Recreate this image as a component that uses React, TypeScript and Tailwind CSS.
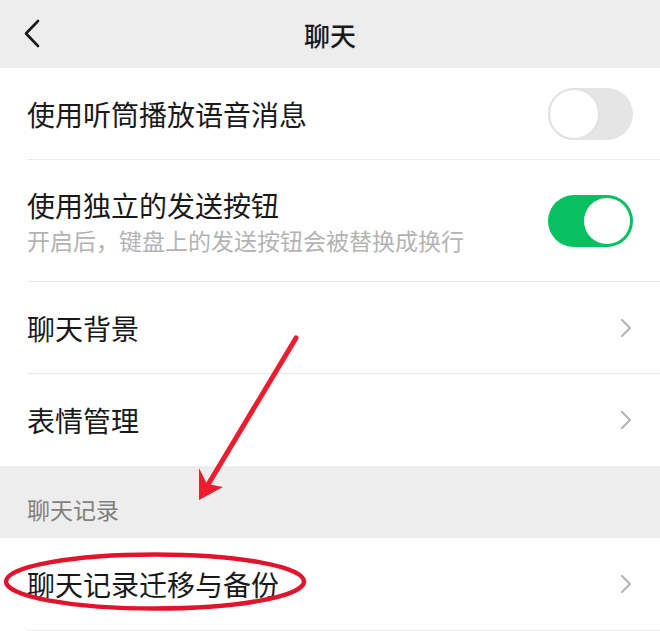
import React from 'react';

const font = { fontFamily: '"Noto Sans CJK SC", "Noto Sans", sans-serif' };

const Chevron = () => (
  <svg width="14" height="22" viewBox="0 0 14 22" className="shrink-0">
    <path d="M3 3 L11 11 L3 19" fill="none" stroke="#b5b5b5" strokeWidth="2.2" strokeLinecap="round" strokeLinejoin="round" />
  </svg>
);

const Toggle = ({ on }: { on: boolean }) =>
  on ? (
    <div className="w-[85px] h-[52px] rounded-full bg-[#07c160] flex items-center justify-end p-[3px] shrink-0">
      <div className="w-[46px] h-[46px] rounded-full bg-white" />
    </div>
  ) : (
    <div className="w-[85px] h-[52px] rounded-full bg-[#e5e5e5] flex items-center justify-start shrink-0">
      <div className="w-[52px] h-[52px] rounded-full bg-white border-[2px] border-[#e2e2e2]" />
    </div>
  );

const Row = ({
  title,
  sub,
  right,
  h = 'h-[92px]',
}: {
  title: string;
  sub?: string;
  right: React.ReactNode;
  h?: string;
}) => (
  <div className={`bg-white pl-[27px] ${h}`}>
    <div className="h-full flex items-center justify-between pr-[27px] border-b border-[#e9e9e9]">
      <div className="flex flex-col">
        <div className="text-[28px] leading-[36px] text-[#191919]">{title}</div>
        {sub && <div className="text-[23px] leading-[30px] text-[#b3b3b3] mt-[2px]">{sub}</div>}
      </div>
      {right}
    </div>
  </div>
);

export default function App() {
  return (
    <div className="relative w-[660px] h-[631px] overflow-hidden bg-[#ededed]" style={font}>
      {/* 顶部导航 */}
      <div className="h-[68px] flex items-center relative bg-[#ededed]">
        <svg width="24" height="32" viewBox="0 0 24 32" className="ml-[20px]">
          <path d="M18 3 L6 15.5 L18 28" fill="none" stroke="#1a1a1a" strokeWidth="2.6" strokeLinecap="round" strokeLinejoin="round" />
        </svg>
        <div className="absolute left-0 right-0 top-0 h-full flex items-center justify-center text-[26px] text-[#191919] font-medium pointer-events-none">
          聊天
        </div>
      </div>

      <Row title="使用听筒播放语音消息" right={<Toggle on={false} />} />
      <Row
        title="使用独立的发送按钮"
        sub="开启后，键盘上的发送按钮会被替换成换行"
        right={<Toggle on />}
        h="h-[122px]"
      />
      <Row title="聊天背景" right={<Chevron />} />
      <div className="bg-white pl-[27px] h-[92px]">
        <div className="h-full flex items-center justify-between pr-[27px]">
          <div className="text-[28px] leading-[36px] text-[#191919]">表情管理</div>
          <Chevron />
        </div>
      </div>

      {/* 分组标题 */}
      <div className="h-[72px] pl-[27px] flex items-end pb-[14px]">
        <div className="text-[23px] leading-[30px] text-[#7f7f7f]">聊天记录</div>
      </div>

      <Row title="聊天记录迁移与备份" right={<Chevron />} h="h-[93px]" />

      {/* 标注 */}
      <svg className="absolute left-0 top-0 pointer-events-none" width="660" height="631" viewBox="0 0 660 631">
        <line x1="296" y1="338" x2="206" y2="488" stroke="#ee1c2e" strokeWidth="5" strokeLinecap="round" />
        <path d="M199 500 L199 468 L207 484 L223 487 Z" fill="#ee1c2e" />
        <ellipse cx="155" cy="581.5" rx="149" ry="27" fill="none" stroke="#e0142c" strokeWidth="4.5" />
      </svg>
    </div>
  );
}
